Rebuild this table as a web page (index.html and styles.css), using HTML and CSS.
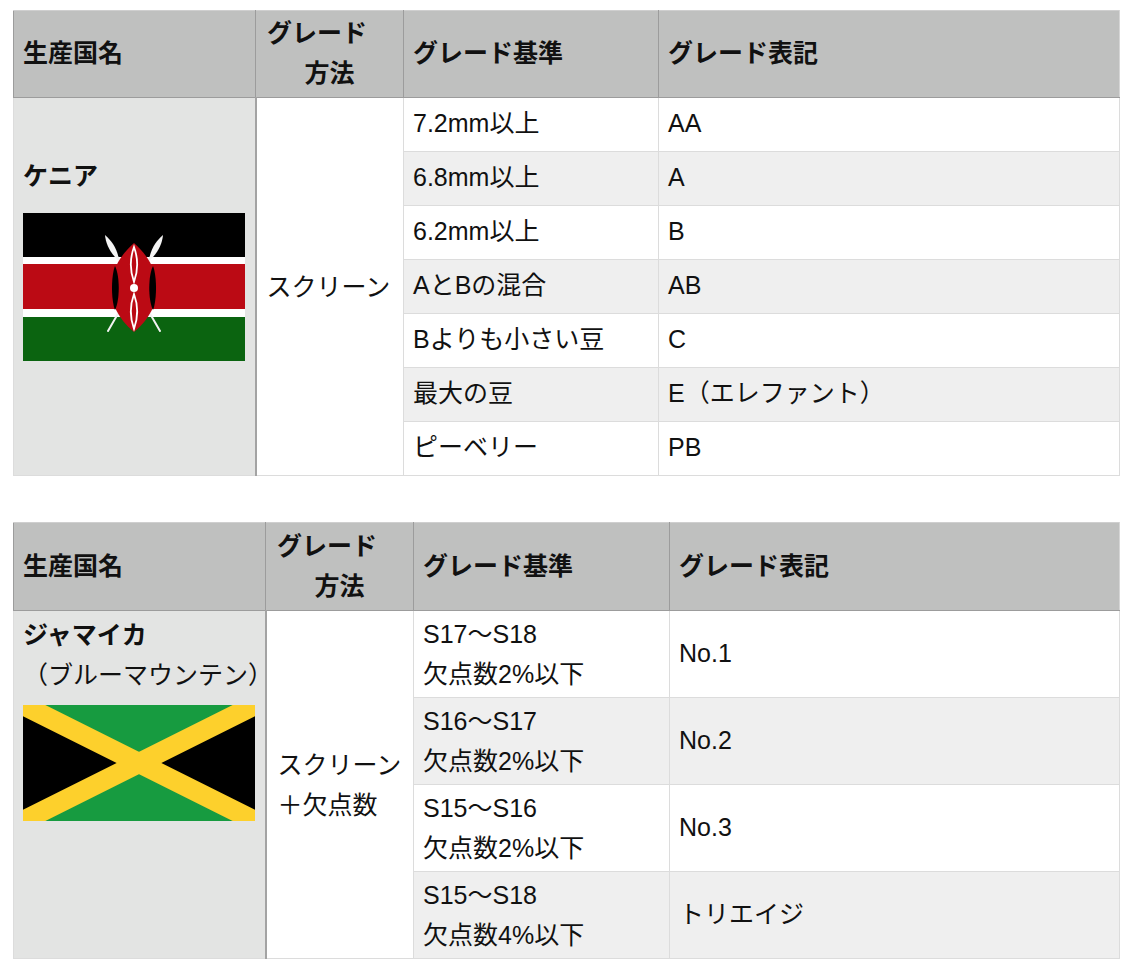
FILE: index.html
```html
<!DOCTYPE html>
<html lang="ja">
<head>
<meta charset="utf-8">
<title>グレード</title>
<link rel="stylesheet" href="styles.css">
</head>
<body>
<div class="page">
  <table class="grade t1">
    <colgroup><col class="c1"><col class="c2"><col class="c3"><col class="c4"></colgroup>
    <thead>
      <tr>
        <th>生産国名</th>
        <th class="method-h"><span class="m1">グレード</span><span class="m2">方法</span></th>
        <th>グレード基準</th>
        <th>グレード表記</th>
      </tr>
    </thead>
    <tbody>
      <tr>
        <td class="country kenya-cell" rowspan="7">
          <div class="cname">ケニア</div>
          <svg class="flag" viewBox="0 0 222 148" width="222" height="148">
            <rect width="222" height="148" fill="#fff"/>
            <rect width="222" height="44" fill="#000"/>
            <rect y="51" width="222" height="45" fill="#bb0a14"/>
            <rect y="104" width="222" height="44" fill="#0b6410"/>
            <g stroke="#f2f2f2" stroke-width="2" stroke-linecap="round">
              <line x1="84" y1="26" x2="137" y2="118"/>
              <line x1="138" y1="26" x2="85" y2="118"/>
            </g>
            <path d="M82,22 C89,28 95,37 96,48 C89,42 83,33 82,22Z" fill="#f4f4f4"/>
            <path d="M140,22 C133,28 127,37 126,48 C133,42 139,33 140,22Z" fill="#f4f4f4"/>
            <path d="M111,30 C127,44 134,60 134,75 C134,90 127,106 111,119 C95,106 88,90 88,75 C88,60 95,44 111,30Z" fill="#bb0a14"/>
            <path d="M92,53 C88,63 88,87 92,97 C97,87 97,63 92,53Z" fill="#000"/>
            <path d="M130,53 C134,63 134,87 130,97 C125,87 125,63 130,53Z" fill="#000"/>
            <g fill="none" stroke="#fff" stroke-width="1.8">
              <path d="M111,34 C107,45 107,58 111,69 C115,58 115,45 111,34Z"/>
              <path d="M111,81 C107,92 107,105 111,116 C115,105 115,92 111,81Z"/>
            </g>
            <circle cx="111" cy="75" r="4" fill="#fff"/>
          </svg>
        </td>
        <td class="method" rowspan="7">スクリーン</td>
        <td class="one">7.2mm以上</td>
        <td class="one">AA</td>
      </tr>
      <tr class="alt"><td class="one">6.8mm以上</td><td class="one">A</td></tr>
      <tr><td class="one">6.2mm以上</td><td class="one">B</td></tr>
      <tr class="alt"><td class="one">AとBの混合</td><td class="one">AB</td></tr>
      <tr><td class="one">Bよりも小さい豆</td><td class="one">C</td></tr>
      <tr class="alt"><td class="one">最大の豆</td><td class="one">E（エレファント）</td></tr>
      <tr><td class="one">ピーベリー</td><td class="one">PB</td></tr>
    </tbody>
  </table>

  <table class="grade t2">
    <colgroup><col class="c1"><col class="c2"><col class="c3"><col class="c4"></colgroup>
    <thead>
      <tr>
        <th>生産国名</th>
        <th class="method-h"><span class="m1">グレード</span><span class="m2">方法</span></th>
        <th>グレード基準</th>
        <th>グレード表記</th>
      </tr>
    </thead>
    <tbody>
      <tr>
        <td class="country jamaica-cell" rowspan="4">
          <div class="cname">ジャマイカ</div>
          <div class="sub">（ブルーマウンテン）</div>
          <svg class="flag" viewBox="0 0 232 116" width="232" height="116">
            <rect width="232" height="116" fill="#000"/>
            <path d="M0,0 H232 L116,58Z" fill="#179b40"/>
            <path d="M0,116 H232 L116,58Z" fill="#179b40"/>
            <path d="M0,0 L232,116 M232,0 L0,116" stroke="#fdd02c" stroke-width="20"/>
          </svg>
        </td>
        <td class="method" rowspan="4">スクリーン<br>＋欠点数</td>
        <td>S17〜S18<br>欠点数2%以下</td>
        <td class="one">No.1</td>
      </tr>
      <tr class="alt"><td>S16〜S17<br>欠点数2%以下</td><td class="one">No.2</td></tr>
      <tr><td>S15〜S16<br>欠点数2%以下</td><td class="one">No.3</td></tr>
      <tr class="alt"><td>S15〜S18<br>欠点数4%以下</td><td class="one">トリエイジ</td></tr>
    </tbody>
  </table>
</div>
</body>
</html>
```

FILE: styles.css
```css
html, body {
  margin: 0;
  padding: 0;
  background: #fff;
}

.page {
  padding: 10px 0 0 13px;
  font-family: "Liberation Sans", "Noto Sans CJK JP", sans-serif;
  font-size: 25px;
  line-height: 40px;
  color: #111;
}

.grade {
  border-collapse: collapse;
  table-layout: fixed;
  width: 1106px;
}

.t2 {
  margin-top: 46px;
}

.t1 .c1 { width: 242px; }
.t1 .c2 { width: 148px; }
.t1 .c3 { width: 255px; }
.t1 .c4 { width: 461px; }

.t2 .c1 { width: 252px; }
.t2 .c2 { width: 148px; }
.t2 .c3 { width: 256px; }
.t2 .c4 { width: 450px; }

.grade th {
  background: #bfc0bf;
  font-weight: bold;
  text-align: left;
  padding: 2px 9px 4px 9px;
  height: 80px;
  border: 1px solid #9c9c9c;
  border-top-color: #cfcfcf;
  vertical-align: middle;
}

.t2 th {
  height: 81px;
}

.grade th:last-child {
  border-right-color: #d6d6d6;
}

.method-h .m1 {
  display: block;
  text-align: left;
  padding-left: 2px;
}

.method-h .m2 {
  display: block;
  text-align: center;
  margin-left: -9px;
  margin-right: -9px;
}

.grade td {
  border: 1px solid #dcdcdc;
  padding: 0 9px;
  vertical-align: middle;
  background: #fff;
  white-space: nowrap;
}

.t1 tbody td {
  height: 53px;
}

.t2 tbody td {
  height: 86px;
}

.t1 tbody td.one {
  height: 50px;
  padding-bottom: 3px;
}

.t2 tbody td.one {
  height: 83px;
  padding-bottom: 3px;
}

.grade tr.alt td {
  background: #efefef;
}

.grade td.country {
  background: #e3e4e3;
  border-right: 2px solid #a3a3a3;
  vertical-align: top;
  overflow: visible;
}

.grade td.method {
  background: #fff;
  padding-left: 10px;
}

.t2 td.method {
  padding-left: 11px;
}

.cname {
  font-weight: bold;
}

.kenya-cell {
  padding-top: 58px !important;
}

.kenya-cell .flag {
  display: block;
  margin-top: 17px;
}

.jamaica-cell {
  padding-top: 4px !important;
}

.jamaica-cell .flag {
  display: block;
  margin-top: 10px;
}

.flag {
  overflow: hidden;
}
```
